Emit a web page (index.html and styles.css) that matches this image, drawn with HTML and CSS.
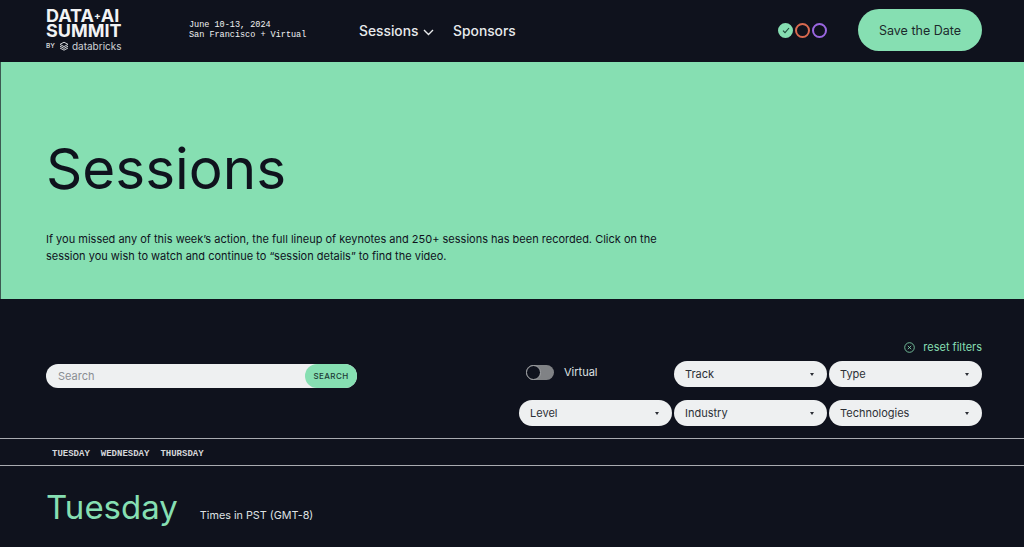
FILE: index.html
```html
<!DOCTYPE html>
<html lang="en">
<head>
  <meta charset="UTF-8" />
  <meta name="viewport" content="width=device-width, initial-scale=1.0"/>
  <title>Sessions</title>
  <link rel="stylesheet" href="styles.css">
</head>
<body>
  <header class="site-header">
    <a class="logo" href="#">
      <span class="logo-line">DATA<span class="logo-plus">+</span>AI</span>
      <span class="logo-line">SUMMIT</span>
      <span class="logo-by">
        <small>BY</small>
        <svg width="10" height="10" viewBox="0 0 10 10" fill="none" stroke="#cfd2d6" stroke-width="1">
          <path d="M1 3.4 5 1.2l4 2.2-4 2.2z"/>
          <path d="M1 5.2l4 2.2 4-2.2"/>
          <path d="M1 7l4 2.2L9 7"/>
        </svg>
        databricks
      </span>
    </a>
    <div class="event-info">
      <div>June 10-13, 2024</div>
      <div>San Francisco + Virtual</div>
    </div>
    <nav class="main-nav">
      <a href="#">Sessions
        <svg width="11" height="7" viewBox="0 0 11 7" fill="none" stroke="#e8eaec" stroke-width="1.4"><path d="M1 1l4.5 4.5L10 1"/></svg>
      </a>
      <a href="#">Sponsors</a>
    </nav>
    <div class="rings">
      <span class="ring ring-done">
        <svg width="8" height="7" viewBox="0 0 8 7" fill="none" stroke="#1d4a3a" stroke-width="1.1"><path d="M1 3.6 3 5.6 7 1"/></svg>
      </span>
      <span class="ring ring-red"></span>
      <span class="ring ring-purple"></span>
    </div>
    <a class="save-btn" href="#">Save the Date</a>
  </header>

  <section class="hero">
    <h1>Sessions</h1>
    <p>If you missed any of this week’s action, the full lineup of keynotes and 250+ sessions has been recorded. Click on the session you wish to watch and continue to “session details” to find the video.</p>
  </section>

  <section class="filters">
    <form class="search">
      <input type="text" placeholder="Search">
      <button type="button">SEARCH</button>
    </form>
    <div class="filter-side">
      <a class="reset" href="#">
        <svg width="11" height="11" viewBox="0 0 11 11" fill="none" stroke="#86dfb2" stroke-width="0.8"><circle cx="5.5" cy="5.5" r="4.8"/><path d="M3.8 3.8l3.4 3.4M7.2 3.8 3.8 7.2"/></svg>
        reset filters
      </a>
      <div class="filter-grid">
        <label class="toggle-row">
          <span class="toggle"><span class="knob"></span></span>
          Virtual
        </label>
        <div class="select">Track</div>
        <div class="select">Type</div>
        <div class="select">Level</div>
        <div class="select">Industry</div>
        <div class="select">Technologies</div>
      </div>
    </div>
  </section>

  <nav class="day-tabs">
    <a href="#">TUESDAY</a>
    <a href="#">WEDNESDAY</a>
    <a href="#">THURSDAY</a>
  </nav>

  <section class="day-head">
    <h2>Tuesday</h2>
    <span>Times in PST (GMT-8)</span>
  </section>
</body>
</html>
```

FILE: styles.css
```css
* {
  box-sizing: border-box;
}

html, body {
  height: 100%;
}

body {
  margin: 0;
  overflow: hidden;
  background: #0f121d;
  color: #e8eaec;
  font-family: Inter, "Noto Sans", sans-serif;
}

a {
  color: inherit;
  text-decoration: none;
}

.site-header {
  height: 62px;
  display: flex;
  align-items: center;
  padding: 0 42px 2px 46px;
}

.logo {
  width: 143px;
  display: flex;
  flex-direction: column;
  color: #f2f3f4;
}

.logo-line {
  font-size: 18px;
  font-weight: 700;
  line-height: 15px;
  letter-spacing: 0;
}

.logo-plus {
  font-size: 10px;
  vertical-align: 3px;
}

.logo-by {
  display: flex;
  align-items: center;
  gap: 3px;
  margin-top: 2px;
  font-size: 10px;
  line-height: 12px;
  color: #cfd2d6;
}

.logo-by small {
  font-size: 6.5px;
  font-weight: 600;
  margin-right: 1px;
}

.event-info {
  width: 170px;
  font-family: "Liberation Mono", monospace;
  font-size: 8.5px;
  line-height: 10px;
  color: #f2f3f4;
}

.main-nav {
  display: flex;
  gap: 19px;
  margin-top: 2px;
  font-size: 13.8px;
  font-weight: 500;
}

.main-nav svg {
  margin-left: 1px;
}

.rings {
  display: flex;
  gap: 2px;
  margin-left: auto;
  margin-right: 31px;
}

.ring {
  width: 15px;
  height: 15px;
  border-radius: 50%;
  border: 2px solid;
  display: flex;
  align-items: center;
  justify-content: center;
}

.ring-done {
  background: #86dfb2;
  border-color: #86dfb2;
}

.ring-red {
  border-color: #d9694f;
}

.ring-purple {
  border-color: #9a66e0;
}

.save-btn {
  width: 124px;
  height: 42px;
  border-radius: 21px;
  background: #86dfb2;
  color: #1c2a2c;
  font-size: 12.5px;
  display: flex;
  align-items: center;
  justify-content: center;
}

.hero {
  height: 237px;
  background: #86dfb2;
  border-left: 1px solid #3c5a52;
  padding: 72px 0 0 45px;
  color: #0f121d;
}

.hero h1 {
  margin: 0;
  font-size: 56.6px;
  line-height: 70px;
  font-weight: 400;
}

.hero p {
  margin: 27px 0 0;
  width: 620px;
  font-size: 11px;
  line-height: 17px;
}

.filters {
  height: 139px;
  display: flex;
  justify-content: space-between;
  padding: 41px 42px 0 46px;
}

.search {
  width: 311px;
  height: 24px;
  margin-top: 24px;
  display: flex;
  background: #eef0f1;
  border-radius: 12px;
}

.search input {
  flex: 1;
  min-width: 0;
  border: none;
  outline: none;
  background: none;
  padding: 0 12px;
  font-family: inherit;
  font-size: 11px;
}

.search input::placeholder {
  color: #8b8e93;
}

.search button {
  width: 52px;
  border: none;
  border-radius: 12px;
  background: #86dfb2;
  color: #1c3a34;
  font-family: inherit;
  font-size: 8px;
  font-weight: 500;
  letter-spacing: 0.4px;
  padding: 0;
}

.filter-side {
  width: 463px;
}

.reset {
  display: flex;
  justify-content: flex-end;
  align-items: center;
  gap: 8px;
  height: 14px;
  margin-bottom: 7px;
  font-size: 11px;
  color: #86dfb2;
}

.filter-grid {
  display: grid;
  grid-template-columns: repeat(3, 153px);
  column-gap: 2px;
  row-gap: 13px;
}

.toggle-row {
  display: flex;
  align-items: center;
  gap: 10px;
  padding: 0 0 4px 7px;
  font-size: 11px;
  color: #dfe1e3;
}

.toggle {
  width: 28px;
  height: 15px;
  border-radius: 8px;
  background: #808285;
  display: block;
}

.knob {
  display: block;
  width: 15px;
  height: 15px;
  border-radius: 50%;
  background: #0f121d;
  border: 1.5px solid #a5a7aa;
}

.select {
  position: relative;
  height: 26px;
  border-radius: 13px;
  background: #eef0f1;
  color: #2c2f36;
  font-size: 11px;
  line-height: 26px;
  padding-left: 11px;
}

.select::after {
  content: "";
  position: absolute;
  right: 13px;
  top: 12px;
  border-left: 2.5px solid transparent;
  border-right: 2.5px solid transparent;
  border-top: 3px solid #2c2f36;
}

.day-tabs {
  height: 28px;
  display: flex;
  align-items: center;
  gap: 11px;
  padding: 3px 0 0 52px;
  border-top: 1px solid #a9abb0;
  border-bottom: 1px solid #a9abb0;
  font-family: "Liberation Mono", monospace;
  font-size: 9px;
  font-weight: 700;
  color: #d5d7da;
}

.day-head {
  display: flex;
  align-items: flex-end;
  gap: 22px;
  padding: 20px 0 0 46px;
}

.day-head h2 {
  margin: 0;
  font-size: 33px;
  line-height: 42px;
  font-weight: 400;
  color: #86dfb2;
}

.day-head span {
  font-size: 10.8px;
  line-height: 18px;
  margin-bottom: 3px;
  color: #dfe1e3;
}
```
